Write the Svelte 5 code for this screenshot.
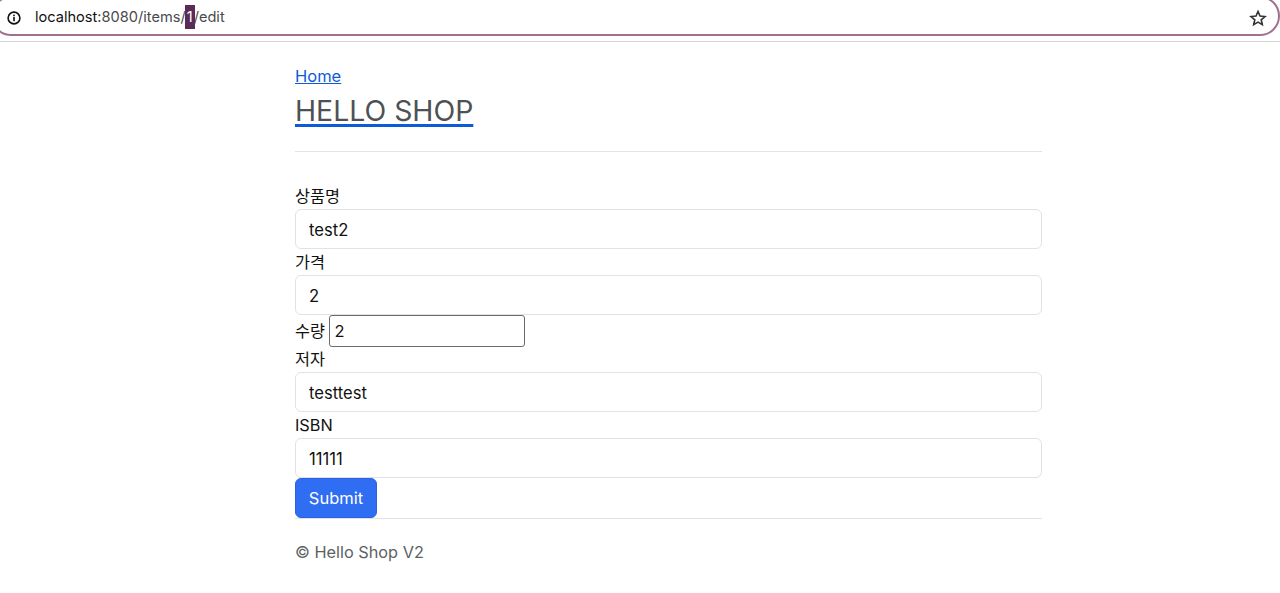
<script lang="ts">
  // fields above and below the small quantity input
  const top = [
    { label: "상품명", value: "test2" },
    { label: "가격", value: "2" }
  ];
  const bottom = [
    { label: "저자", value: "testtest" },
    { label: "ISBN", value: "11111" }
  ];
</script>

<div class="browser_bar">
  <div class="omnibox">
    <svg class="info_icon" width="16" height="16" viewBox="0 0 16 16">
      <circle cx="8" cy="8" r="5.9" fill="none" stroke="#111" stroke-width="1.6" />
      <rect x="7.2" y="7" width="1.6" height="4.2" fill="#111" />
      <rect x="7.2" y="4.6" width="1.6" height="1.6" fill="#111" />
    </svg>
    <div class="url">
      <span class="host">localhost</span>:8080/items/<span class="selected">1</span>/edit
    </div>
    <svg class="star_icon" width="20" height="20" viewBox="0 0 20 20">
      <path
        d="M10 3.4l2 4.6 5 .5-3.8 3.3 1.1 4.9L10 14.1l-4.3 2.6 1.1-4.9L3 8.5l5-.5z"
        fill="none"
        stroke="#333"
        stroke-width="1.6"
        stroke-linejoin="miter"
      />
    </svg>
  </div>
</div>

<div class="container">
  <a class="home_link" href="#home">Home</a>
  <h1 class="shop_title"><a href="#shop">HELLO SHOP</a></h1>
  <hr class="header_line" />

  <form class="item_form">
    {#each top as field}
      <label class="field_label" for={field.label}>{field.label}</label>
      <input class="form_control" id={field.label} type="text" value={field.value} />
    {/each}

    <div class="quantity_row">
      <label class="field_label" for="quantity">수량</label>
      <input class="plain_input" id="quantity" type="text" value="2" />
    </div>

    {#each bottom as field}
      <label class="field_label" for={field.label}>{field.label}</label>
      <input class="form_control" id={field.label} type="text" value={field.value} />
    {/each}

    <button class="submit_button" type="button">Submit</button>
  </form>

  <hr class="footer_line" />
  <p class="copyright">© Hello Shop V2</p>
</div>

<style>
  :global(body) {
    background: #fff;
    font-family: Inter, "Noto Sans CJK KR", sans-serif;
    font-size: 16px;
    color: #111;
  }
  .browser_bar {
    height: 41px;
    border-bottom: 1px solid #d4d4d6;
    overflow: hidden;
  }
  .omnibox {
    display: flex;
    align-items: center;
    height: 40px;
    margin: -4px 0 0 -9px;
    padding-left: 13px;
    padding-right: 10px;
    border: 2px solid #a2708f;
    border-radius: 20px;
    box-sizing: border-box;
  }
  .info_icon {
    flex: none;
    margin-top: 3px;
  }
  .url {
    margin-left: 13px;
    margin-top: 2px;
    font-size: 14.6px;
    color: #4a4a4c;
    flex: 1;
    white-space: nowrap;
  }
  .host {
    color: #111;
  }
  .selected {
    padding: 3px 2px;
    margin: 0 -1px;
    background: #5a2a58;
    color: #fff;
  }
  .star_icon {
    flex: none;
    margin-top: 3px;
  }
  .container {
    width: 747px;
    margin-left: 295px;
    padding-top: 21px;
  }
  .home_link {
    display: block;
    width: max-content;
    font-size: 16.5px;
    line-height: 26px;
    color: #0d5bd7;
  }
  .shop_title {
    margin: 5px 0 0;
    font-size: 28.4px;
    font-weight: 400;
    line-height: 33px;
  }
  .shop_title a {
    color: #4d5154;
    text-decoration-color: #0d5bd7;
    text-decoration-thickness: 2.5px;
    text-underline-offset: 3px;
  }
  .header_line {
    margin: 24px 0 0;
    border: 0;
    border-top: 1px solid #e2e3e5;
  }
  .item_form {
    display: flex;
    flex-direction: column;
    align-items: flex-start;
    margin-top: 31px;
  }
  .field_label {
    font-size: 16.3px;
    line-height: 25px;
    padding-top: 1px;
    color: #111;
  }
  .form_control {
    display: block;
    width: 100%;
    height: 40px;
    box-sizing: border-box;
    padding: 1px 13px 0;
    border: 1px solid #dfe2e6;
    border-radius: 6px;
    font-family: inherit;
    font-size: 16.6px;
    color: #111;
    background: #fff;
  }
  .quantity_row {
    display: flex;
    align-items: center;
    gap: 4.5px;
    height: 32px;
    margin-bottom: -1px;
  }
  .plain_input {
    width: 196px;
    height: 32px;
    box-sizing: border-box;
    padding: 0 4px;
    border: 1px solid #6b6b6b;
    border-radius: 3px;
    font-family: inherit;
    font-size: 16.5px;
    color: #111;
  }
  .submit_button {
    height: 40px;
    width: 82px;
    padding: 0;
    border: 1px solid #2a62e0;
    border-radius: 6px;
    background: #2f6df3;
    color: #fff;
    font-family: inherit;
    font-size: 16.5px;
  }
  .footer_line {
    margin: 0;
    border: 0;
    border-top: 1px solid #e2e3e5;
  }
  .copyright {
    margin: 20px 0 0;
    font-size: 16.3px;
    line-height: 26px;
    color: #5b5f63;
  }
</style>
